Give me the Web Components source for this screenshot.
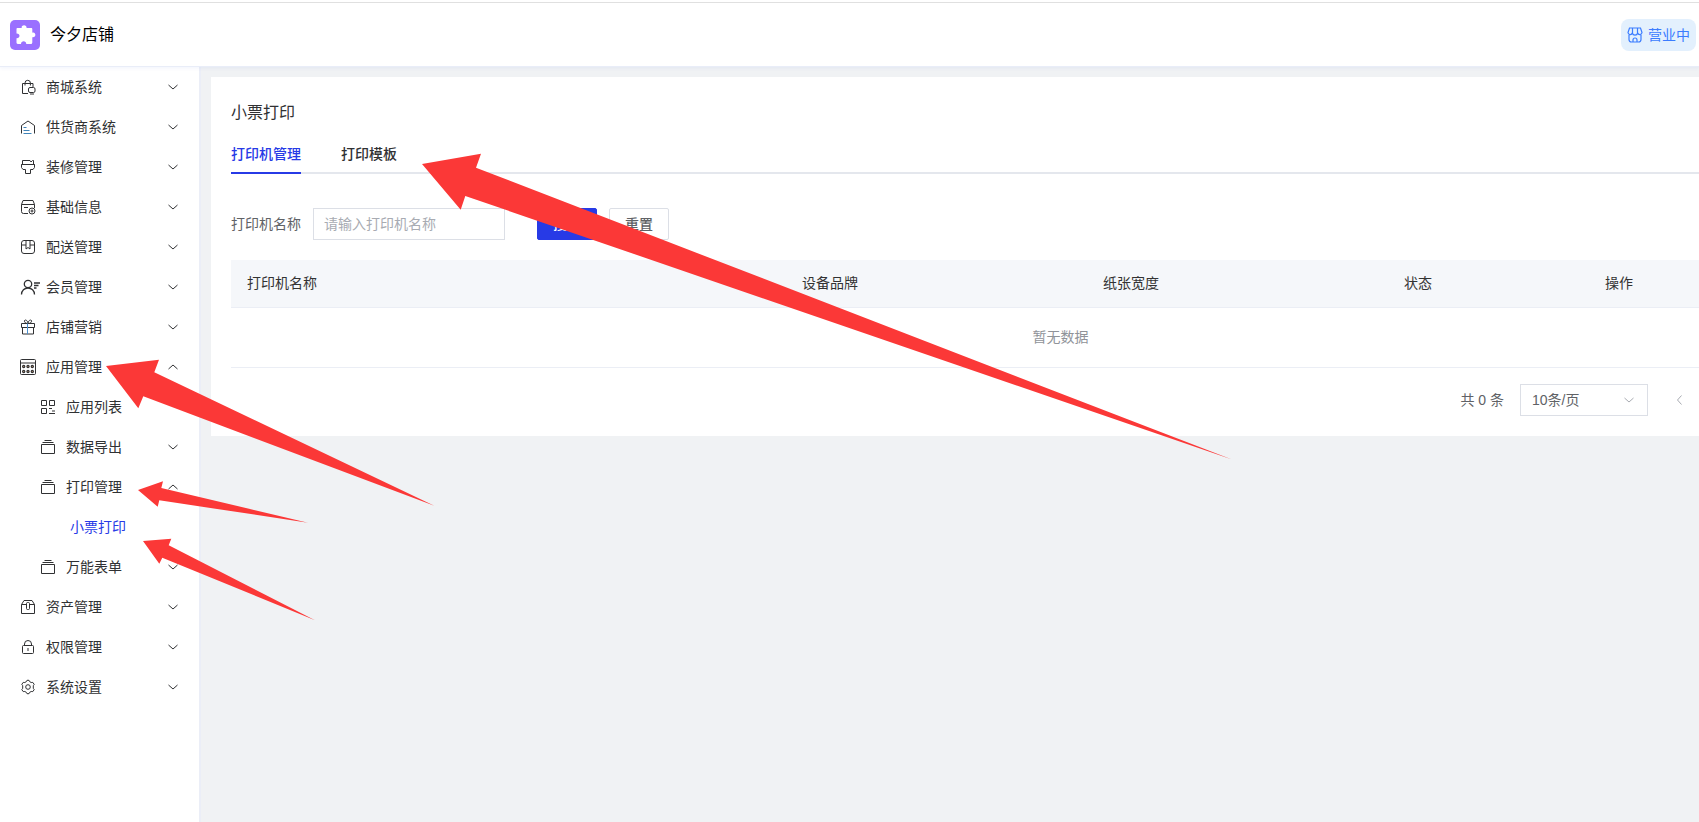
<!DOCTYPE html>
<html lang="zh-CN">
<head>
<meta charset="UTF-8">
<meta name="viewport" content="width=device-width, initial-scale=1">
<title>小票打印</title>
<style>
    body {
        margin: 0;
        font-family: "Liberation Sans", "Noto Sans CJK SC", sans-serif;
        font-size: 14px;
        line-height: 20px;
        color: #303133;
        background: #f0f2f4;
    }
</style>
</head>
<body>
<shop-app></shop-app>

<script>
const ICONS = {
    mall: '<path d="M8 14.500H2.500V4.500H13V8M5 6.500V4a2.700 2.700 0 0 1 5.400 0v2.500"/><rect x="8.500" y="8.500" width="6.500" height="5" rx="1.500"/><path d="M10 15h4"/>',
    supplier: '<path d="M1.500 14.500V6.500L8 2l6.500 4.500v8"/><path stroke="#3f83b8" d="M3.500 8.500h3M3.500 11.500h6M3.500 14.500h8"/>',
    decorate: '<path d="M2.500 1.500H10l1 1.500 1.500-1.500h1v4h1v3L13 10.500h-2.500v4h-5v-4H3L1.500 8.500v-3h1zM1.500 5.500h13"/>',
    base: '<path d="M8 14.500H3.500a2 2 0 0 1-2-2v-7l1.500-4h10l1.500 4V9M1.500 5.500h13M4 8.500h4"/><circle cx="12" cy="12" r="3"/><circle cx="12" cy="12" r="1"/>',
    delivery: '<rect x="1.500" y="1.500" width="13" height="13" rx="2.500"/><path d="M6 1.500V10l2-1.500 2 1.500V1.500M1.500 6H6M10 6h4.500"/>',
    member: '<g stroke-width="1.300"><circle cx="8" cy="5" r="3.700"/><path d="M1.500 15.500c0-4 3-6.500 6.500-6.500s6.500 2.500 6.500 6.500M14 4h6M14 6.500h4.500M14 9h2.500"/></g>',
    gift: '<path d="M1.500 4.500h13v4h-13zM2.500 8.500v6.500h11V8.500M8 4.500C6 4.500 4 3.500 4.500 1.500 6 0 8 2.500 8 4.500c0-2 2-4.500 3.500-3C12 3.500 10 4.500 8 4.500"/><path stroke="#4a90d0" d="M7.500 4.500V15"/>',
    app: '<rect x=".5" y=".5" width="15" height="15" rx="1"/><path d="M.5 4h15"/><g fill="#c99a72" stroke-width="1.200"><circle cx="3.700" cy="7.500" r="1.100"/><circle cx="8" cy="7.500" r="1.100"/><circle cx="12.300" cy="7.500" r="1.100"/><circle cx="3.700" cy="12.500" r="1.100"/><circle cx="8" cy="12.500" r="1.100"/><circle cx="12.300" cy="12.500" r="1.100"/></g>',
    list: '<path d="M1.500 1.500h5v5h-5zM9.500 1.500h5v5h-5zM1.500 9.500h5v5h-5zM9 9.500h3M12 12h3M9 14.500h6"/>',
    stack: '<path d="M1.500 5.500h13v9h-13zM2.500 3.500h11M4.500 1.500h7"/>',
    asset: '<path d="M1.500 5.500 4 1.500h8l2.500 4v9h-13zM1.500 5.500h5M9.500 5.500h5"/><rect x="6.500" y="3.500" width="3" height="7" rx="1"/>',
    lock: '<rect x="2.500" y="6.500" width="11" height="8" rx="1"/><path d="M4.500 6.500V5a3.500 3.500 0 0 1 7 0v1.500M8 9v3"/>',
    setting: '<path d="M6.300 2.700 7 1.300h2l.7 1.400 1.500.8 1.600-.1 1.400 2-.9 1.300v2.600l.9 1.300-1.400 2-1.600-.1-1.500.8L9 14.700H7l-.7-1.400-1.500-.8-1.600.1-1.400-2 .9-1.300V6.700l-.9-1.300 1.400-2 1.600.1z"/><circle cx="8" cy="8" r="2.300"/>',
    down: '<path d="m3.500 6 4.500 4 4.500-4"/>',
    up: '<path d="m3.500 10 4.500-4 4.500 4"/>',
    left: '<path d="M9.500 3.500 5.500 8l4 4.500"/>',
    store: '<g stroke-width="1.200"><path d="M2.500 1h11l1.500 4.500a2.200 2.200 0 0 1-4.300.5 2.800 2.800 0 0 1-5.400 0A2.200 2.200 0 0 1 1 5.500zM5.500 1v5M10.500 1v5M2 8v4.500A2.500 2.500 0 0 0 4.500 15h7a2.500 2.500 0 0 0 2.500-2.500V8"/><path d="M6 15v-2a2 2 0 0 1 4 0v2"/></g>'
};

const MENU = [
    {label: '商城系统', icon: 'mall', state: 'closed'},
    {label: '供货商系统', icon: 'supplier', state: 'closed'},
    {label: '装修管理', icon: 'decorate', state: 'closed'},
    {label: '基础信息', icon: 'base', state: 'closed'},
    {label: '配送管理', icon: 'delivery', state: 'closed'},
    {label: '会员管理', icon: 'member', state: 'closed'},
    {label: '店铺营销', icon: 'gift', state: 'closed'},
    {label: '应用管理', icon: 'app', state: 'open'},
    {label: '应用列表', icon: 'list', level: 2},
    {label: '数据导出', icon: 'stack', level: 2, state: 'closed'},
    {label: '打印管理', icon: 'stack', level: 2, state: 'open'},
    {label: '小票打印', level: 3, active: true},
    {label: '万能表单', icon: 'stack', level: 2, state: 'closed'},
    {label: '资产管理', icon: 'asset', state: 'closed'},
    {label: '权限管理', icon: 'lock', state: 'closed'},
    {label: '系统设置', icon: 'setting', state: 'closed'}
];

// common base: every element renders its html once into an open shadow root
class BaseElement extends HTMLElement {
    constructor() {
        super();
        this.attachShadow({mode: 'open'});
    }

    connectedCallback() {
        this.shadowRoot.innerHTML = this.getHtml();
    }
}

customElements.define('ui-icon', class extends BaseElement {
    getHtml() {
        return `
        <style>
        :host {
            display: block;
            flex: none;
            width: 16px;
            height: 16px;
        }
        svg {
            display: block;
            overflow: visible;
        }
        </style>
        <svg width="16" height="16" viewBox="0 0 16 16" fill="none" stroke="currentColor" aria-hidden="true">
            ${ICONS[this.getAttribute('name')] || ''}
        </svg>`;
    }
});

customElements.define('shop-header', class extends BaseElement {
    getHtml() {
        return `
        <style>
        :host {
            display: block;
            position: relative;
            z-index: 1;
            padding-top: 2px;
            background: #fff;
            box-shadow: inset 0 -1px #e9edf8, 0 1px 4px rgba(60, 100, 220, .08);
        }
        header {
            display: flex;
            align-items: center;
            justify-content: space-between;
            height: 64px;
            padding: 0 3px 0 10px;
            border-top: 1px solid #e0e0e0;
        }
        .brand {
            display: flex;
            align-items: center;
            gap: 10px;
            font-size: 16px;
            line-height: 24px;
            color: #000;
        }
        .logo {
            width: 30px;
            height: 30px;
            border-radius: 5px;
            background: #9a70ff;
        }
        </style>
        <header>
            <div class="brand">
                <svg class="logo" viewBox="0 0 30 30" aria-hidden="true">
                    <path fill="#fff" d="M7.500 8h4.200C10.800 4.500 16.900 4 16.600 7.900H21c1 0 1.300.5 1.300 1.300v3.500c3.700-1.200 4.500 5.200 0 4.500v5c0 1-.5 1.800-1.500 1.800h-4.500c0-3.800-5.300-3.800-5.300 0H7.800c-.8 0-1.300-.6-1.300-1.400v-4.300c4 .3 4-5 0-4.700V9.200c0-.7.300-1.200 1-1.200z"/>
                </svg>
                <slot name="brand"></slot>
            </div>
            <slot></slot>
        </header>`;
    }
});

customElements.define('status-button', class extends BaseElement {
    getHtml() {
        return `
        <style>
        :host {
            display: block;
        }
        button {
            display: flex;
            align-items: center;
            gap: 5px;
            height: 32px;
            padding: 0 6px;
            border: 0;
            border-radius: 8px;
            background: #e3f0fd;
            color: #3b7cff;
            font: inherit;
        }
        </style>
        <button type="button"><ui-icon name="store"></ui-icon><slot></slot></button>`;
    }
});

customElements.define('menu-item', class extends BaseElement {
    getHtml() {
        const icon = this.getAttribute('icon');
        const state = this.getAttribute('state');
        const iconHtml = icon ? `<ui-icon name="${icon}"></ui-icon>` : '';
        // items that fold are buttons, the others are links
        const content = state
            ? `<button type="button" aria-expanded="${state === 'open'}">${iconHtml}<span><slot></slot></span><ui-icon name="${state === 'open' ? 'up' : 'down'}"></ui-icon></button>`
            : `<a href="#">${iconHtml}<span><slot></slot></span></a>`;
        return `
        <style>
        :host {
            display: block;
            --indent: 20px;
        }
        :host([level="2"]) {
            --indent: 40px;
        }
        :host([level="3"]) {
            --indent: 70px;
        }
        :host([active]) {
            color: #273ae6;
        }
        button, a {
            box-sizing: border-box;
            display: flex;
            align-items: center;
            gap: 10px;
            width: 100%;
            height: 40px;
            padding: 0 18px 0 var(--indent);
            border: 0;
            background: none;
            color: inherit;
            font: inherit;
            text-align: left;
            text-decoration: none;
        }
        span {
            flex: 1;
        }
        </style>
        ${content}`;
    }
});

customElements.define('side-menu', class extends BaseElement {
    getHtml() {
        const items = MENU.map(item => `
            <menu-item level="${item.level || 1}"
                ${item.icon ? `icon="${item.icon}"` : ''}
                ${item.state ? `state="${item.state}"` : ''}
                ${item.active ? 'active' : ''}>${item.label}</menu-item>`).join('');
        return `
        <style>
        :host {
            display: block;
            flex: none;
            width: 199px;
            border-right: 2px solid #ebeef7;
            background: #fff;
        }
        </style>
        <nav>${items}</nav>`;
    }
});

customElements.define('tab-bar', class extends BaseElement {
    getHtml() {
        return `
        <style>
        :host {
            display: block;
            border-bottom: 2px solid #e4e7ed;
        }
        div {
            display: flex;
            gap: 40px;
            margin-bottom: -2px;
        }
        button {
            height: 40px;
            padding: 2px 0 0;
            border: 0;
            border-bottom: 2px solid transparent;
            background: none;
            color: #303133;
            font: inherit;
            font-weight: 500;
        }
        button[aria-selected="true"] {
            color: #273ae6;
            border-color: #273ae6;
        }
        </style>
        <div role="tablist">
            <button type="button" role="tab" aria-selected="true">打印机管理</button>
            <button type="button" role="tab" aria-selected="false">打印模板</button>
        </div>`;
    }
});

customElements.define('search-form', class extends BaseElement {
    getHtml() {
        return `
        <style>
        :host {
            display: block;
            color: #606266;
        }
        form, .actions, .field {
            display: flex;
            align-items: center;
            gap: 12px;
        }
        form {
            gap: 32px;
        }
        input {
            box-sizing: border-box;
            width: 192px;
            height: 32px;
            padding: 0 10px;
            border: 1px solid #dcdfe6;
            background: #fff;
            color: inherit;
            font: inherit;
        }
        input::placeholder {
            color: #a8abb2;
        }
        button {
            width: 60px;
            height: 32px;
            padding: 0;
            border: 1px solid #dcdfe6;
            border-radius: 2px;
            background: #fff;
            color: inherit;
            font: inherit;
            font-weight: 500;
        }
        .primary {
            border-color: #273ae6;
            background: #273ae6;
            color: #fff;
        }
        </style>
        <form>
            <div class="field">
                <label for="name">打印机名称</label>
                <input id="name" type="text" placeholder="请输入打印机名称">
            </div>
            <div class="actions">
                <button class="primary" type="button">搜索</button>
                <button type="reset">重置</button>
            </div>
        </form>`;
    }
});

customElements.define('printer-table', class extends BaseElement {
    getHtml() {
        return `
        <style>
        :host {
            display: block;
        }
        table {
            width: 100%;
            table-layout: fixed;
            border-collapse: separate;
            border-spacing: 0;
        }
        th, td {
            box-sizing: border-box;
            padding: 0 16px 2px;
            border-bottom: 1px solid #ebeef5;
        }
        th {
            height: 48px;
            background: #f5f7fa;
            color: #333;
            font-weight: 400;
            text-align: left;
        }
        td {
            height: 60px;
            color: #909399;
            text-align: center;
        }
        .wide {
            width: 301px;
        }
        .narrow {
            width: 201px;
        }
        </style>
        <table>
            <colgroup><col><col class="wide"><col class="wide"><col class="narrow"><col class="wide"></colgroup>
            <thead>
                <tr><th>打印机名称</th><th>设备品牌</th><th>纸张宽度</th><th>状态</th><th>操作</th></tr>
            </thead>
            <tbody>
                <tr><td colspan="5">暂无数据</td></tr>
            </tbody>
        </table>`;
    }
});

customElements.define('table-pager', class extends BaseElement {
    getHtml() {
        return `
        <style>
        :host {
            display: flex;
            align-items: center;
            justify-content: flex-end;
            gap: 16px;
            padding-right: 194px;
            color: #606266;
        }
        .select {
            display: grid;
            align-items: center;
        }
        .select > * {
            grid-area: 1 / 1;
        }
        .select ui-icon {
            justify-self: end;
            margin-right: 11px;
            color: #a8abb2;
            pointer-events: none;
        }
        select {
            appearance: none;
            box-sizing: border-box;
            width: 128px;
            height: 32px;
            padding: 0 11px;
            border: 1px solid #dcdfe6;
            border-radius: 0;
            background: #fff;
            color: inherit;
            font: inherit;
        }
        button {
            display: flex;
            align-items: center;
            justify-content: center;
            width: 32px;
            height: 32px;
            padding: 0;
            border: 0;
            background: none;
            color: #a8abb2;
        }
        </style>
        <span>共 0 条</span>
        <div class="select">
            <select aria-label="每页条数"><option>10条/页</option></select>
            <ui-icon name="down"></ui-icon>
        </div>
        <button type="button" aria-label="上一页" disabled><ui-icon name="left"></ui-icon></button>`;
    }
});

customElements.define('printer-page', class extends BaseElement {
    getHtml() {
        return `
        <style>
        :host {
            display: block;
            flex: 1;
            padding: 10px;
        }
        section {
            padding: 20px;
            background: #fff;
        }
        h1 {
            margin: 0 0 5px;
            font-size: 16px;
            font-weight: 400;
            line-height: 32px;
        }
        search-form {
            margin: 34px 0 20px;
        }
        table-pager {
            margin-top: 16px;
        }
        </style>
        <section>
            <h1>小票打印</h1>
            <tab-bar></tab-bar>
            <search-form></search-form>
            <printer-table></printer-table>
            <table-pager></table-pager>
        </section>`;
    }
});

// red guide arrows drawn over the page
customElements.define('guide-arrows', class extends BaseElement {
    getHtml() {
        return `
        <style>
        :host {
            position: absolute;
            inset: 0;
            z-index: 2;
            overflow: hidden;
            pointer-events: none;
        }
        svg {
            display: block;
            width: 100%;
            height: 100%;
        }
        </style>
        <svg fill="#fb3837" aria-hidden="true">
            <polygon points="422,164 481,153.700 476,167.700 1232,459.500 465.300,196 460.700,209.700"/>
            <polygon points="106,366 159,359.700 154.300,372.300 434.300,505.700 143.300,396.300 138.300,408.300"/>
            <polygon points="138,490 163,481.300 161.300,488 308,522.700 159.300,500.300 157.700,506.700"/>
            <polygon points="143,541 171.300,538.700 168.700,545.300 315,620.300 162.300,557.700 159.300,563.700"/>
        </svg>`;
    }
});

customElements.define('shop-app', class extends BaseElement {
    getHtml() {
        return `
        <style>
        :host {
            display: flex;
            flex-direction: column;
            position: relative;
            min-height: 100vh;
            overflow: hidden;
        }
        main {
            display: flex;
            flex: 1;
            min-width: 1920px;
        }
        </style>
        <shop-header>
            <span slot="brand">今夕店铺</span>
            <status-button>营业中</status-button>
        </shop-header>
        <main>
            <side-menu></side-menu>
            <printer-page></printer-page>
        </main>
        <guide-arrows></guide-arrows>`;
    }
});
</script>
</body>
</html>
